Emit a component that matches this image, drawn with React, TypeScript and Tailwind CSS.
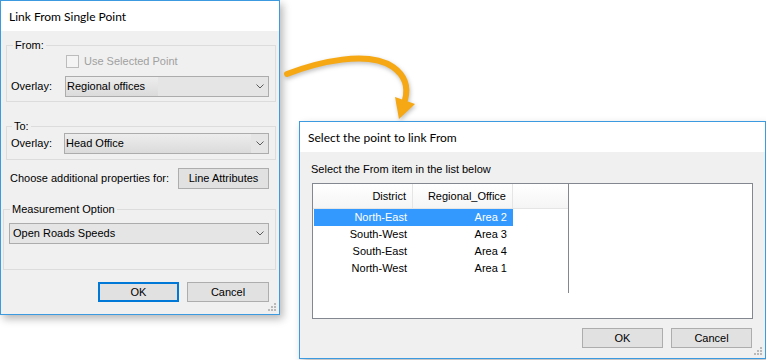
import React from "react";

const Chevron = () => (
  <svg width="8" height="5" viewBox="0 0 8 5" className="mr-[4px] ml-auto shrink-0">
    <polyline points="0.5,0.5 4,4 7.5,0.5" fill="none" stroke="#5a5a5a" strokeWidth="1" />
  </svg>
);

const Select = ({ value, className, hl }: { value: string; className: string; hl?: string }) => (
  <div className={`flex h-[21px] items-center border border-[#acacac] bg-[#e5e5e5] ${className}`}>
    <div className={`flex h-full items-center pl-[1px] ${hl ?? ""}`}>
      <span className="whitespace-nowrap">{value}</span>
    </div>
    <Chevron />
  </div>
);

const Button = ({ label, className }: { label: string; className: string }) => (
  <button className={`flex h-[20px] items-center justify-center bg-[#e1e1e1] ${className}`}>{label}</button>
);

const Grip = () => (
  <svg width="8" height="8" viewBox="0 0 8 8" className="absolute bottom-[3px] right-[3px]">
    {[
      [6, 0],
      [3, 3],
      [6, 3],
      [0, 6],
      [3, 6],
      [6, 6],
    ].map(([x, y]) => (
      <rect key={`${x}-${y}`} x={x} y={y} width="2" height="2" fill="#b9b9b9" />
    ))}
  </svg>
);

const rows = [
  ["North-East", "Area 2"],
  ["South-West", "Area 3"],
  ["South-East", "Area 4"],
  ["North-West", "Area 1"],
];

export default function App() {
  return (
    <div className="relative h-[360px] w-[766px] overflow-hidden bg-white font-['Liberation_Sans',Arial,sans-serif] text-[11px] leading-[15px] text-black">
      {/* first dialog */}
      <div className="absolute left-0 top-0 flex h-[315px] w-[280px] flex-col border border-[#3c9be0] bg-[#f0f0f0] shadow-[3px_4px_8px_rgba(0,0,0,0.28)]">
        <div className="flex h-[30px] items-center bg-white pl-[8px] font-['Lato',sans-serif] text-[12px]">Link From Single Point</div>

        <fieldset className="ml-[5px] mt-[7px] h-[64px] w-[270px] border border-[#dcdcdc] p-0">
          <legend className="ml-[6px] px-[2px] leading-[14px]">From:</legend>
          <div className="flex flex-col pl-[4px]">
            <div className="ml-[55px] mt-[3px] flex h-[13px] items-center gap-[5px] text-[#a0a0a0]">
              <span className="h-[13px] w-[13px] border border-[#bcbcbc] bg-[#f4f4f4]" />
              <span>Use Selected Point</span>
            </div>
            <div className="mt-[8px] flex items-center">
              <span className="w-[54px]">Overlay:</span>
              <Select value="Regional offices" className="w-[204px]" hl="w-[92px] bg-gradient-to-b from-[#ededed] to-[#dbdbdb]" />
            </div>
          </div>
        </fieldset>

        <fieldset className="ml-[5px] mt-[17px] h-[41px] w-[270px] border border-[#dcdcdc] p-0">
          <legend className="ml-[5px] px-[2px] leading-[14px]">To:</legend>
          <div className="flex items-center pl-[4px]">
            <span className="w-[53px]">Overlay:</span>
            <Select value="Head Office" className="w-[205px]" hl="w-[186px] bg-gradient-to-b from-[#ededed] to-[#dbdbdb]" />
          </div>
        </fieldset>

        <div className="mt-[8px] flex items-center justify-between pl-[9px] pr-[10px]">
          <span className="whitespace-nowrap">Choose additional properties for:</span>
          <Button label="Line Attributes" className="h-[21px] w-[91px] border border-[#adadad]" />
        </div>

        <fieldset className="ml-[2px] mt-[13px] h-[68px] w-[273px] border border-[#dcdcdc] p-0">
          <legend className="ml-[6px] px-[2px] leading-[14px]">Measurement Option</legend>
          <Select value="Open Roads Speeds" className="ml-[5px] mt-[7px] w-[260px] pl-[2px]" />
        </fieldset>

        <div className="mt-[12px] flex justify-end gap-[8px] pr-[10px]">
          <Button label="OK" className="w-[81px] border-2 border-[#0078d7]" />
          <Button label="Cancel" className="w-[82px] border border-[#adadad]" />
        </div>
        <Grip />
      </div>

      {/* arrow */}
      <svg width="160" height="90" viewBox="275 40 160 90" className="absolute left-[275px] top-[40px] drop-shadow-[1px_2px_2px_rgba(0,0,0,0.25)]">
        <path d="M287,74 C318,62 368,50 393,67 C407,77 408,89 405,100" fill="none" stroke="#f5a814" strokeWidth="6" strokeLinecap="round" />
        <polygon points="395,97 415,104 399,119" fill="#f5a814" />
      </svg>

      {/* second dialog */}
      <div className="absolute left-[299px] top-[121px] flex h-[238px] w-[467px] flex-col border border-[#3c9be0] bg-[#f0f0f0] shadow-[3px_4px_8px_rgba(0,0,0,0.28)]">
        <div className="flex h-[30px] items-center bg-white pl-[8px] font-['Lato',sans-serif] text-[12px]">Select the point to link From</div>
        <div className="mt-[10px] pl-[11px]">Select the From item in the list below</div>

        <div className="ml-[12px] mt-[6px] flex h-[136px] w-[441px] border border-[#828790] bg-white">
          <div className="h-[109px] w-[256px] border-r border-[#828790]">
            <div className="flex h-[25px] border-b border-[#e5e5e5] bg-gradient-to-b from-white to-[#f5f5f5]">
              <div className="flex w-[100px] items-center justify-end border-r border-[#e5e5e5] pr-[6px]">District</div>
              <div className="flex w-[100px] items-center justify-end border-r border-[#e5e5e5] pr-[6px]">Regional_Office</div>
            </div>
            {rows.map(([d, a], i) => (
              <div key={d} className={`ml-[1px] flex h-[17px] w-[199px] items-center ${i === 0 ? "bg-[#3399ff] text-white" : ""}`}>
                <span className="w-[99px] pr-[6px] text-right">{d}</span>
                <span className="w-[100px] pr-[6px] text-right">{a}</span>
              </div>
            ))}
          </div>
        </div>

        <div className="mt-[9px] flex justify-end gap-[8px] pr-[13px]">
          <Button label="OK" className="w-[81px] border border-[#adadad]" />
          <Button label="Cancel" className="w-[81px] border border-[#adadad]" />
        </div>
        <Grip />
      </div>
    </div>
  );
}
